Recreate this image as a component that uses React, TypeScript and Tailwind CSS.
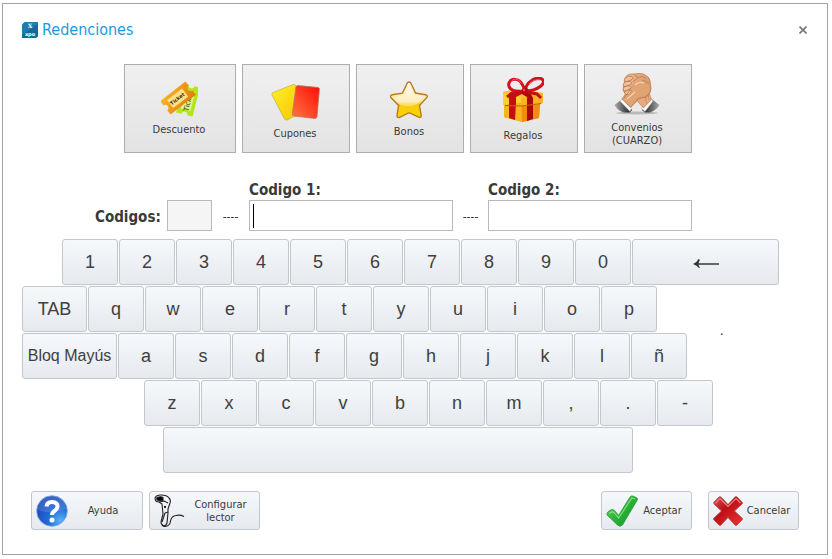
import React from 'react'

const uiFont = "font-['DejaVu_Sans_Condensed','DejaVu_Sans',sans-serif]"
const keyFont = "font-['Liberation_Sans',Arial,sans-serif]"

function LogoIcon() {
  return (
    <svg className="w-4 h-4" viewBox="0 0 16 16" aria-hidden="true">
      <path d="M5 0h11v13q0 3-3 3H0V5Q0 0 5 0z" fill="#126a97" />
      <path d="M5 0h11v2L0 13V5Q0 0 5 0z" fill="#217da9" />
      <text x="8" y="6" textAnchor="middle" fontSize="6" fontWeight="bold" fill="#fff" fontFamily="DejaVu Serif">X</text>
      <text x="8" y="14" textAnchor="middle" fontSize="5" fontWeight="bold" fill="#fff" fontFamily="DejaVu Sans">xpo</text>
    </svg>
  )
}

function TicketIcon() {
  return (
    <svg className="w-[37px] h-9" viewBox="0 0 37 36" aria-hidden="true">
      <defs>
        <linearGradient id="ticketOrange" x1="0" y1="0" x2="1" y2="1">
          <stop offset="0" stopColor="#f9b52c" />
          <stop offset="1" stopColor="#e07c08" />
        </linearGradient>
      </defs>
      <g transform="translate(27 19) rotate(-76)">
        <path d="M-15-8.500h30v5.500a3 3 0 0 0 0 6v5.500h-30v-5.500a3 3 0 0 0 0-6z" fill="#b4e51a" />
        <path d="M-10-5H9V5H-10z" fill="#dff58c" />
        <text x="-1" y="3" textAnchor="middle" fontSize="7" fill="#2f3b08" fontFamily="DejaVu Sans">Ticket</text>
      </g>
      <g transform="translate(17 17) rotate(-38)">
        <path d="M-16-8.500h32v5.500a3 3 0 0 0 0 6v5.500h-32v-5.500a3 3 0 0 0 0-6z" fill="url(#ticketOrange)" />
        <path d="M-10-5H9V5H-10z" fill="#fde28a" />
        <text x="-1" y="2" textAnchor="middle" fontSize="5" fontWeight="bold" fill="#3b2b08" fontFamily="DejaVu Sans">Ticket</text>
      </g>
    </svg>
  )
}

function CardsIcon() {
  return (
    <svg className="w-[50px] h-[38px]" viewBox="0 0 50 38" aria-hidden="true">
      <defs>
        <linearGradient id="cardYellow" x1="0" y1="0" x2="1" y2="1">
          <stop offset="0" stopColor="#fff02a" />
          <stop offset="1" stopColor="#f5c400" />
        </linearGradient>
        <linearGradient id="cardRed" x1="1" y1="0" x2="0" y2="1">
          <stop offset="0" stopColor="#fb0d05" />
          <stop offset="1" stopColor="#ff7640" />
        </linearGradient>
      </defs>
      <path d="M3 9.500L23 1.500q2-.7 2.500 1L31 28q0 2-1 2.500L17 37q-2 .5-2.500-1L2 12q-.5-2 1-2.500z" fill="url(#cardYellow)" stroke="#c9ad3c" strokeWidth=".7" />
      <path d="M28 2.500l20 2q1.500.3 1.400 1.500L47 33.500q-.4 2-2 2L24 33q-1.700-.3-1.600-2L26 4q.3-1.700 2-1.500z" fill="url(#cardRed)" stroke="#b87062" strokeWidth=".8" />
    </svg>
  )
}

function StarIcon() {
  return (
    <svg className="w-10 h-[38px]" viewBox="0 0 40 38" aria-hidden="true">
      <defs>
        <linearGradient id="starFill" x1="0" y1="0" x2="0" y2="1">
          <stop offset="0" stopColor="#fffdf5" />
          <stop offset=".55" stopColor="#fde39b" />
          <stop offset=".64" stopColor="#f7ca0c" />
          <stop offset="1" stopColor="#fbd900" />
        </linearGradient>
      </defs>
      <path
        d="M20 1q1.500 0 2.200 1.800L26.500 12l10 1.700q3.300.7 1 3.200L30.500 24.500l1.700 9.800q.2 2.800-2.400 1.900L20 31.700l-9.500 4.600q-2.700.8-2.500-2l1.600-9.800L2.300 17q-2-2.500 1-3.200l10.200-1.700 4.400-9.300Q18.600 1 20 1z"
        fill="url(#starFill)"
        stroke="#b9781c"
        strokeWidth="1.400"
      />
      <path d="M20 4l4.700 9.800 10.500 2L28 23q-5 4-17 1l-6-7.500 9.800-2.300z" fill="#fff" opacity=".35" />
    </svg>
  )
}

function GiftIcon() {
  return (
    <svg className="w-[42px] h-[46px]" viewBox="0 0 42 46" aria-hidden="true">
      <path d="M1 15l15-3 25 4v10l-3 1-1 14-17 4L2 40V28l-1-1z" fill="#f7a313" />
      <path d="M1 15l18 5v6L1 28z" fill="#ffcf35" />
      <path d="M2 28l17-1 1 18-18-5z" fill="#fbb41d" />
      <path d="M19 20l22-4v10l-22 2z" fill="#ffb21f" />
      <path d="M20 29l18-2-1 14-17 4z" fill="#f38c0c" />
      <path d="M1 15l15-3 25 4-22 5z" fill="#ffc62c" />
      <path d="M7 17l15-4 4 1-12 6v6l-1 17-6-2V27z" fill="#c80d10" />
      <path d="M20 14l9 3 2 4v21l-6 2V20l-7-4z" fill="#ad0808" />
      <path d="M3 28.500l17 .500 19-2.500" fill="none" stroke="#bf6305" strokeWidth="1.200" />
      <path d="M23 14C13 16 5 12 7 6c2-5 10-5 13 1 2 3 3 7 3 7z" fill="none" stroke="#d3101c" strokeWidth="3" />
      <path d="M23 14C24 5 34-1 40 2c5 4-4 12-17 12z" fill="none" stroke="#d3101c" strokeWidth="3" />
      <path d="M9 5c2-4 7-4 10 1M27 7c3-3 7-5 11-4" fill="none" stroke="#ff5c63" strokeWidth="1" />
      <path d="M22 15l-12 1-5 4M25 15l10 2 4 4" fill="none" stroke="#c50d16" strokeWidth="3" />
      <circle cx="23" cy="14" r="3.500" fill="#bd0712" />
      <circle cx="22" cy="13" r="1.200" fill="#f0565c" />
    </svg>
  )
}

function HandsIcon() {
  return (
    <svg className="w-[46px] h-[42px]" viewBox="0 0 46 42" aria-hidden="true">
      <defs>
        <linearGradient id="skinFront" x1="0" y1="0" x2="1" y2="1">
          <stop offset="0" stopColor="#f0bf97" />
          <stop offset=".6" stopColor="#d99c6c" />
          <stop offset="1" stopColor="#c07f50" />
        </linearGradient>
        <linearGradient id="sleeveLeft" x1="0" y1="0" x2="1" y2="0">
          <stop offset="0" stopColor="#aaa" />
          <stop offset="1" stopColor="#161616" />
        </linearGradient>
        <linearGradient id="sleeveRight" x1="1" y1="0" x2="0" y2="0">
          <stop offset="0" stopColor="#aaa" />
          <stop offset="1" stopColor="#161616" />
        </linearGradient>
      </defs>
      <ellipse cx="23" cy="40" rx="21" ry="1.500" fill="#999" opacity=".6" />
      <path d="M45.500 32L37 25.500 28 37l3 2.500h5q6-2 9.500-7.500z" fill="url(#sleeveRight)" />
      <path d="M39 28l-2.500-2.500L27 35l4 3.500z" fill="#fafafa" stroke="#bbb" strokeWidth=".5" />
      <path d="M34 17l3.500 9.500L29.500 35 18 22z" fill="#e3ab7f" stroke="#a9673b" strokeWidth=".5" />
      <path d="M31 24l2 7M34 22l1 5" fill="none" stroke="#c58658" strokeWidth=".7" />
      <path d="M.5 32L9 25.500 18 37l-2 2.500h-6Q4 38 .5 32z" fill="url(#sleeveLeft)" />
      <path d="M6 28l3-3 9 9-2 4.500z" fill="#fafafa" stroke="#bbb" strokeWidth=".5" />
      <path d="M14 2Q16 .5 20 1l5-.5q4-.3 7 2 3 1.500 4 5l1 8q0 4-3 7-3 2.500-7 2.500-4 .5-5 4l-5.500 5.500L8 26l3.500-5Q8 18 9.500 14L11 5q1-2 3-3z" fill="url(#skinFront)" stroke="#a9673b" strokeWidth=".6" />
      <path d="M18 13q4-6 10-6l7 4 1 6q-1 6-9 7-5 0-6 4l-4 5-7-7 7-8z" fill="#e0a476" opacity=".9" />
      <path d="M12 4.500q3-2 6-1 2 1.500 0 3l-5 2q-3 .5-3-1.500zM10.500 9.500q3-2 6-1 3 1.500 0 3l-5 2q-2.500.5-2.500-1.500zM10 14q3-2 6-1 2.500 1.500 0 3L11.500 18q-2.500 0-2.500-2zM11.500 18q2-1 5-1 2 1.500 0 3l-2 1.500q-3 .5-4-1.500z" fill="#efc09a" stroke="#ad6c40" strokeWidth=".6" />
      <path d="M20 1.500l4 3 5-1 3 2.500M24 4.500L19 9M28 7q4 1 7 4M17 16l-7 9" fill="none" stroke="#b57446" strokeWidth=".7" />
      <path d="M21 12q4-4 9-2M13 26l8-7" fill="none" stroke="#f7d1b0" strokeWidth="1.200" />
    </svg>
  )
}

function HelpIcon() {
  return (
    <svg className="w-8 h-8 shrink-0" viewBox="0 0 32 32" aria-hidden="true">
      <defs>
        <radialGradient id="helpBlue" cx=".78" cy=".82" r=".85">
          <stop offset="0" stopColor="#56b4f7" />
          <stop offset=".5" stopColor="#2367d8" />
          <stop offset="1" stopColor="#1c4db8" />
        </radialGradient>
      </defs>
      <circle cx="16" cy="16" r="15.300" fill="url(#helpBlue)" stroke="#7ca3dd" strokeWidth=".8" />
      <path d="M2 15a14 14 0 0 1 28-1Q16 20 2 15z" fill="#fff" opacity=".12" />
      <path d="M10.500 11.500Q11 7 16 7q5.500 0 5.500 4.500 0 2.500-3 4.500-2.500 1.500-2.500 4" fill="none" stroke="#fff" strokeWidth="4" />
      <circle cx="16" cy="25" r="2.500" fill="#fff" />
    </svg>
  )
}

function ScannerIcon() {
  return (
    <svg className="w-8 h-[34px] shrink-0" viewBox="0 0 32 34" fill="none" stroke="#222" strokeWidth="1.100" strokeLinejoin="round" aria-hidden="true">
      <path d="M1 4Q2 1 7 1q6 0 8 3 2 2 1 5l-2 6v4l-1 10q-1 3-3 3-3-1-3-4l2-8-1-10-3-2Q1 8 1 4z" />
      <path d="M3 3.500q4-1.500 6 0v3H4.500Q2 6 3 3.500z" fill="#000" />
      <path d="M5 8l5-1 4 2M14 18l-3 1-3 9" />
      <circle cx="11" cy="13" r=".6" fill="#000" />
      <path d="M8 31q2 2 5 1 3-1 3.500-5 1-5 5.500-5.500 4-1 8 1" />
    </svg>
  )
}

function CheckIcon() {
  return (
    <svg className="w-8 h-8 shrink-0" viewBox="0 0 32 32" aria-hidden="true">
      <defs>
        <linearGradient id="checkGreen" x1="0" y1="0" x2="1" y2="1">
          <stop offset="0" stopColor="#7cdc73" />
          <stop offset=".5" stopColor="#27b335" />
          <stop offset="1" stopColor="#15932a" />
        </linearGradient>
      </defs>
      <path d="M1 18q2-3 5-3.500 2 0 3.500 2l3 4L24 2q1-1.500 3-1l4 2q1 1 0 2.500L16.500 30q-2.500 2.500-5 0L1 20z" fill="url(#checkGreen)" stroke="#2f9a3b" strokeWidth=".8" strokeLinejoin="round" />
      <path d="M3.500 18.500q3-3 5-.5l4 5L26 3l3 1" fill="none" stroke="#9be894" strokeWidth="1.200" opacity=".8" />
    </svg>
  )
}

function CrossIcon() {
  return (
    <svg className="w-[30px] h-[30px] shrink-0" viewBox="0 0 30 30" aria-hidden="true">
      <defs>
        <linearGradient id="crossRed" x1="0" y1="0" x2="1" y2="1">
          <stop offset="0" stopColor="#d85555" />
          <stop offset=".4" stopColor="#bd1015" />
          <stop offset="1" stopColor="#ef3333" />
        </linearGradient>
      </defs>
      <path d="M6 1L1 6q-.5 1 0 2l7.500 7L1 22q-1 1 0 2l5 5q1 1 2 0l7-7.500L22 29q1 1 2 0l5-5q1-1 0-2l-7.500-7L29 8q1-1 0-2l-5-5q-1-1-2 0l-7 7.500L8 1Q7 .3 6 1z" fill="url(#crossRed)" stroke="#b04448" strokeWidth=".8" />
      <path d="M2.500 7.500L7 2.500l8 8 8-8 4.500 4.500" fill="none" stroke="#eba0a0" strokeWidth="1.100" opacity=".8" />
    </svg>
  )
}

function BackArrow() {
  return (
    <svg className="w-[26px] h-3" viewBox="0 0 26 12" aria-hidden="true">
      <path d="M3 8h23" stroke="#444" strokeWidth="1.600" />
      <path d="M0 8q4-1.500 5.500-5l1.500.7Q5.500 6 5.500 8t1.500 3.500l-1 .5Q4 9.500 0 8z" fill="#333" />
    </svg>
  )
}

interface TileProps {
  label: string
  wide?: boolean
  top?: string
  children: React.ReactNode
}

function Tile({ label, wide, top = "pt-4", children }: TileProps) {
  return (
    <button
      type="button"
      className={`${wide ? "w-28" : "w-[108px]"} ${top} h-[89px] pr-0.5 flex flex-col items-center border border-[#adadad] bg-linear-to-b from-[#f0f0f0] to-[#e3e3e3]`}
    >
      {children}
      <span className="mt-1.5 text-[11px] leading-[13px] whitespace-pre-line">{label}</span>
    </button>
  )
}

interface KeyProps {
  label: string
  width?: string
  size?: string
  children?: React.ReactNode
}

function Key({ label, width = "w-14", size = "text-lg", children }: KeyProps) {
  return (
    <button
      type="button"
      aria-label={label}
      className={`${width} ${size} ${keyFont} h-[46px] shrink-0 flex items-center justify-center rounded-[3px] border border-[#c3c6ca] bg-linear-to-b from-[#f5f9fc] to-[#e6e9ed] text-[#404040] whitespace-nowrap`}
    >
      {children ?? label}
    </button>
  )
}

interface ActionProps {
  label: string
  width: string
  children: React.ReactNode
}

function ActionButton({ label, width, children }: ActionProps) {
  return (
    <button
      type="button"
      className={`${width} h-[39px] px-1 flex items-center rounded-[3px] border border-[#c3c6ca] bg-linear-to-b from-[#f5f9fc] to-[#e6e9ed]`}
    >
      {children}
      <span className="flex-1 text-[11px] leading-[13px] text-center whitespace-pre-line">{label}</span>
    </button>
  )
}

const digits = ["1", "2", "3", "4", "5", "6", "7", "8", "9", "0"]
const topLetters = ["q", "w", "e", "r", "t", "y", "u", "i", "o", "p"]
const homeLetters = ["a", "s", "d", "f", "g", "h", "j", "k", "l", "ñ"]
const bottomLetters = ["z", "x", "c", "v", "b", "n", "m", ",", ".", "-"]

function Keyboard() {
  return (
    <section aria-label="Teclado" className="mt-2 pl-[19px] flex flex-col gap-px">
      <div className="flex gap-px pl-10">
        {digits.map((k) => <Key key={k} label={k} />)}
        <Key label="Borrar" width="w-[147px]"><BackArrow /></Key>
      </div>
      <div className="flex gap-px">
        <Key label="TAB" width="w-[65px]" />
        {topLetters.map((k) => <Key key={k} label={k} />)}
      </div>
      <div className="flex gap-px">
        <Key label="Bloq Mayús" width="w-[95px]" size="text-base" />
        {homeLetters.map((k) => <Key key={k} label={k} />)}
        <span className="ml-8 text-xs leading-none h-0 -mt-2 text-black">.</span>
      </div>
      <div className="flex gap-px pl-[122px]">
        {bottomLetters.map((k) => <Key key={k} label={k} />)}
      </div>
      <div className="flex pl-[141px]">
        <Key label="Espacio" width="w-[470px]">{" "}</Key>
      </div>
    </section>
  )
}

function App() {
  const input = "h-[31px] px-1 border border-[#b9b9b9] bg-white outline-none"

  return (
    <main className={`${uiFont} mt-[3px] ml-0.5 mr-1 pb-6 border border-[#a3a3a3] bg-white text-[#3a3a3a]`}>
      <header className="flex items-center gap-1 pt-4 pl-[19px] pr-5">
        <LogoIcon />
        <h1 className="text-base leading-5 text-[#1b9ae0]">Redenciones</h1>
        <button type="button" aria-label="Cerrar" className="ml-auto">
          <svg className="w-2 h-2" viewBox="0 0 8 8" aria-hidden="true">
            <path d="M.5.5l7 7M7.500.5l-7 7" stroke="#777" strokeWidth="1.700" />
          </svg>
        </button>
      </header>

      <div className="mt-6 pl-[121px] flex gap-1.5">
        <Tile label="Descuento" wide><TicketIcon /></Tile>
        <Tile label="Cupones" top="pt-[18px]"><CardsIcon /></Tile>
        <Tile label="Bonos"><StarIcon /></Tile>
        <Tile label="Regalos" top="pt-3"><GiftIcon /></Tile>
        <Tile label={"Convenios\n(CUARZO)"} top="pt-2"><HandsIcon /></Tile>
      </div>

      <form className="mt-[27px] pl-[92px] flex items-end">
        <label htmlFor="codigos" className="w-[72px] text-[15px] leading-7 font-bold">Codigos:</label>
        <input id="codigos" disabled className="w-[45px] h-[31px] border border-[#b9b9b9] bg-[#f5f5f5]" />
        <span className="w-[37px] text-center text-xs leading-7">----</span>
        <div className="flex flex-col">
          <label htmlFor="codigo1" className="text-[15px] leading-5 font-bold">Codigo 1:</label>
          <div className="relative flex">
            <input id="codigo1" className={`${input} w-[204px]`} />
            <span className="absolute left-1 top-1 w-px h-6 bg-black" />
          </div>
        </div>
        <span className="w-[35px] text-center text-xs leading-7">----</span>
        <div className="flex flex-col">
          <label htmlFor="codigo2" className="text-[15px] leading-5 font-bold">Codigo 2:</label>
          <input id="codigo2" className={`${input} w-[204px]`} />
        </div>
      </form>

      <Keyboard />

      <footer className="mt-[18px] pl-7 pr-7 flex justify-between">
        <div className="flex gap-1.5">
          <ActionButton label="Ayuda" width="w-28"><HelpIcon /></ActionButton>
          <ActionButton label={"Configurar\nlector"} width="w-[111px]"><ScannerIcon /></ActionButton>
        </div>
        <div className="flex gap-4">
          <ActionButton label="Aceptar" width="w-[91px]"><CheckIcon /></ActionButton>
          <ActionButton label="Cancelar" width="w-[91px]"><CrossIcon /></ActionButton>
        </div>
      </footer>
    </main>
  )
}

export default App
